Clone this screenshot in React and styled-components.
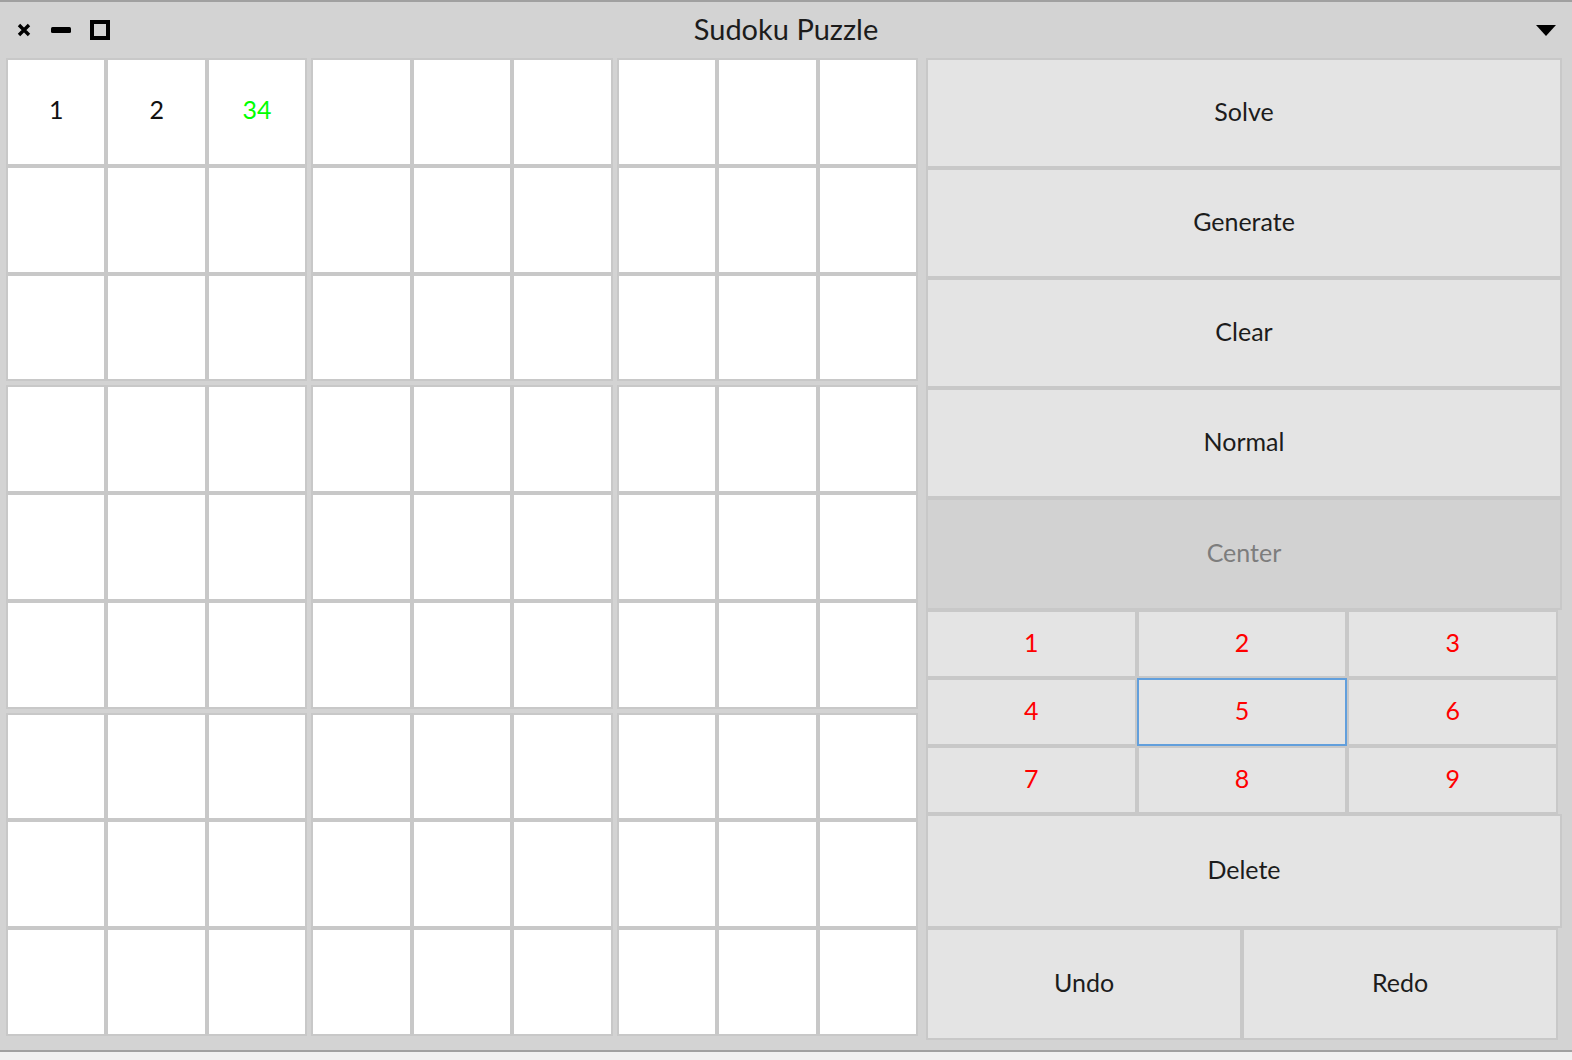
import React from "react";
import styled, { createGlobalStyle } from "styled-components";

const GlobalStyle = createGlobalStyle`
  html, body {
    margin: 0;
    padding: 0;
    background: #f0f0f0;
  }
  body {
    font-family: Lato, "Liberation Sans", sans-serif;
  }
`;

const Window = styled.div`
  height: 1052px;
  box-sizing: border-box;
  border-top: 2px solid #a0a0a0;
  border-bottom: 2px solid #a0a0a0;
  background: #d3d3d3;
  display: flex;
  flex-direction: column;
`;

const TitleBar = styled.div`
  height: 56px;
  display: grid;
  grid-template-columns: 1fr auto 1fr;
  align-items: center;
  padding: 0 16px;
`;

const Controls = styled.div`
  display: flex;
  align-items: center;
  gap: 19px;
`;

const Title = styled.div`
  font-size: 29px;
  color: #1c1c1c;
  margin-top: -4px;
`;

const Menu = styled.div`
  justify-self: end;
  display: flex;
  margin-top: 2px;
`;

const Body = styled.div`
  flex: 1;
  display: flex;
  gap: 8px;
  padding: 0 10px 10px 6px;
  align-items: flex-start;
`;

const Board = styled.div`
  width: 912px;
  height: 978px;
  display: grid;
  grid-template-columns: repeat(3, 1fr);
  grid-template-rows: repeat(3, 1fr);
  gap: 4px;
`;

const Block = styled.div`
  display: grid;
  grid-template-columns: repeat(3, 1fr);
  grid-template-rows: repeat(3, 1fr);
`;

const Cell = styled.div`
  background: #ffffff;
  border: 2px solid #c8c8c8;
  display: flex;
  align-items: center;
  justify-content: center;
  padding-bottom: 5px;
  font-size: 25px;
  color: ${(p) => p.$color || "#111"};
`;

const Panel = styled.div`
  flex: 1;
  height: 982px;
  display: flex;
  flex-direction: column;
`;

const ActionButton = styled.div`
  height: ${(p) => p.$h}px;
  flex: none;
  box-sizing: border-box;
  border: 2px solid #c8c8c8;
  background: ${(p) => (p.$pressed ? "#d2d2d2" : "#e4e4e4")};
  color: ${(p) => (p.$pressed ? "#7d7d7d" : "#1c1c1c")};
  display: flex;
  align-items: center;
  justify-content: center;
  padding-bottom: 5px;
  font-size: 25px;
`;

const Numpad = styled.div`
  height: 204px;
  flex: none;
  margin-right: 4px;
  display: grid;
  grid-template-columns: repeat(3, 1fr);
  grid-template-rows: repeat(3, 1fr);
`;

const PadKey = styled.div`
  box-sizing: border-box;
  border: 2px solid ${(p) => (p.$focused ? "#629fdc" : "#c8c8c8")};
  background: #e4e4e4;
  color: #ff0000;
  display: flex;
  align-items: center;
  justify-content: center;
  padding-bottom: 4px;
  font-size: 25px;
`;

const SplitRow = styled.div`
  height: 112px;
  flex: none;
  margin-right: 4px;
  display: grid;
  grid-template-columns: 1fr 1fr;
`;

const CloseIcon = () => (
  <svg width="16" height="16" viewBox="0 0 16 16">
    <path d="M3 3 L13 13 M13 3 L3 13" stroke="#000" strokeWidth="3.4" />
  </svg>
);

const MinIcon = () => (
  <svg width="20" height="8" viewBox="0 0 20 8">
    <rect x="0" y="1" width="20" height="6" rx="1.5" fill="#000" />
  </svg>
);

const MaxIcon = () => (
  <svg width="20" height="20" viewBox="0 0 20 20">
    <rect x="2" y="2" width="16" height="16" fill="none" stroke="#000" strokeWidth="4" />
  </svg>
);

const MenuIcon = () => (
  <svg width="20" height="12" viewBox="0 0 20 12">
    <path d="M0 0 L20 0 L10 11 Z" fill="#000" />
  </svg>
);

const values = {
  "0-0": { text: "1" },
  "0-1": { text: "2" },
  "0-2": { text: "34", color: "#00ff00" },
};

export default function App() {
  const blocks = [];
  for (let b = 0; b < 9; b++) {
    const br = Math.floor(b / 3);
    const bc = b % 3;
    const cells = [];
    for (let c = 0; c < 9; c++) {
      const r = br * 3 + Math.floor(c / 3);
      const col = bc * 3 + (c % 3);
      const v = values[`${r}-${col}`];
      cells.push(
        <Cell key={c} $color={v && v.color}>
          {v ? v.text : ""}
        </Cell>
      );
    }
    blocks.push(<Block key={b}>{cells}</Block>);
  }

  return (
    <>
      <GlobalStyle />
      <Window>
        <TitleBar>
          <Controls>
            <CloseIcon />
            <MinIcon />
            <MaxIcon />
          </Controls>
          <Title>Sudoku Puzzle</Title>
          <Menu>
            <MenuIcon />
          </Menu>
        </TitleBar>
        <Body>
          <Board>{blocks}</Board>
          <Panel>
            <ActionButton $h={110}>Solve</ActionButton>
            <ActionButton $h={110}>Generate</ActionButton>
            <ActionButton $h={110}>Clear</ActionButton>
            <ActionButton $h={110}>Normal</ActionButton>
            <ActionButton $h={112} $pressed>Center</ActionButton>
            <Numpad>
              {[1, 2, 3, 4, 5, 6, 7, 8, 9].map((n) => (
                <PadKey key={n} $focused={n === 5}>{n}</PadKey>
              ))}
            </Numpad>
            <ActionButton $h={114}>Delete</ActionButton>
            <SplitRow>
              <ActionButton $h={112}>Undo</ActionButton>
              <ActionButton $h={112}>Redo</ActionButton>
            </SplitRow>
          </Panel>
        </Body>
      </Window>
    </>
  );
}
